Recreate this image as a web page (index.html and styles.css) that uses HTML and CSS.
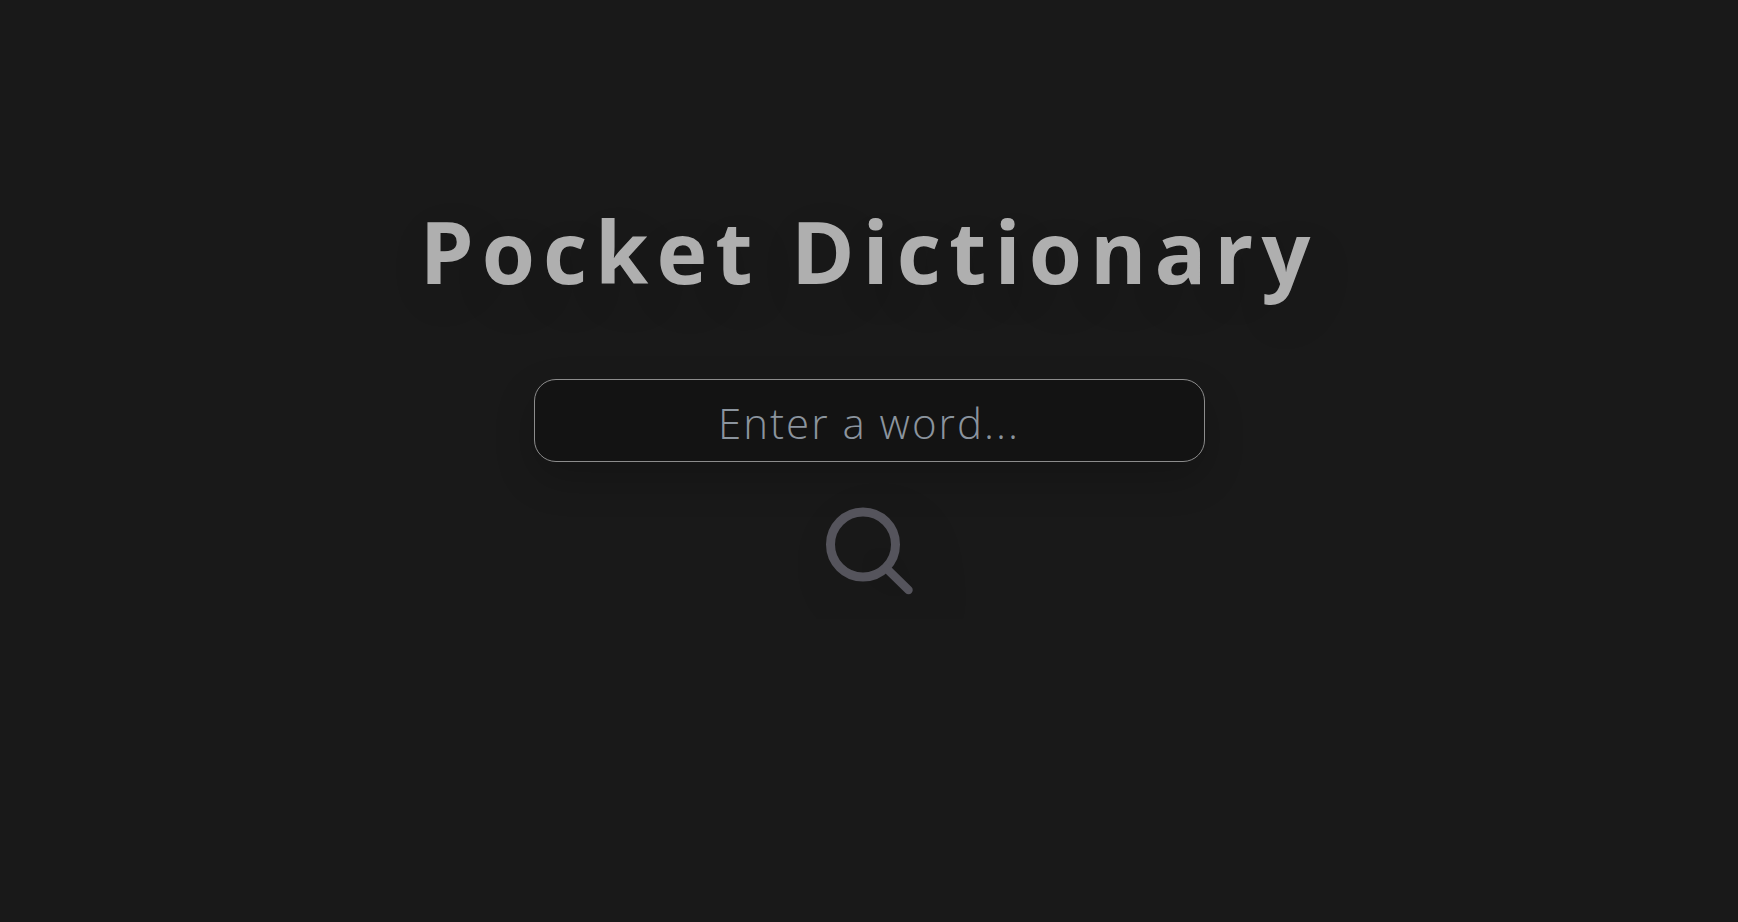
FILE: index.html
```html
<!DOCTYPE html>
<html lang="en">
<head>
<meta charset="utf-8">
<meta name="viewport" content="width=device-width, initial-scale=1">
<title>Pocket Dictionary</title>
<link rel="stylesheet" href="styles.css">
</head>
<body>
<main class="page">
  <h1 class="title">Pocket Dictionary</h1>
  <form class="search">
    <input class="search-input" type="text" placeholder="Enter a word..." aria-label="Word">
    <button class="search-button" type="submit" aria-label="Search">
      <svg class="search-icon" viewBox="0 0 88 88" fill="none" stroke="currentColor" stroke-width="9" stroke-linecap="round" aria-hidden="true">
        <circle cx="38" cy="37.5" r="32.5"/>
        <path d="M61 61 83.5 83" stroke-width="8.5"/>
      </svg>
    </button>
  </form>
</main>
</body>
</html>
```
FILE: styles.css
```css
* {
  box-sizing: border-box;
}

body {
  margin: 0;
  background: #191919;
  font-family: "Segoe UI", "Open Sans", sans-serif;
}

.page {
  display: flex;
  flex-direction: column;
  align-items: center;
  gap: 68px;
  padding: 191px 24px 24px;
}

.title {
  margin: 0;
  color: #afafaf;
  font-size: 86px;
  font-weight: 700;
  line-height: 120px;
  letter-spacing: 8px;
  text-align: center;
  text-shadow: 8px 16px 48px rgba(0, 0, 0, 0.12);
}

.search {
  display: flex;
  flex-direction: column;
  align-items: center;
  gap: 45px;
  width: 100%;
}

.search-input {
  width: 100%;
  max-width: 671px;
  height: 83px;
  padding: 4px 24px 0;
  border: 1px solid #8c8c8c;
  border-radius: 22px;
  background: #131313;
  box-shadow: 0 16px 40px rgba(0, 0, 0, 0.2);
  color: #afafaf;
  font-family: inherit;
  font-size: 42px;
  font-weight: 300;
  letter-spacing: 2px;
  text-align: center;
}

.search-input::placeholder {
  color: #8b949e;
  opacity: 1;
}

.search-button {
  padding: 0;
  border: 0;
  background: none;
  color: #55545c;
  cursor: pointer;
}

.search-icon {
  display: block;
  width: 88px;
  height: 88px;
  overflow: visible;
  filter: drop-shadow(16px 20px 24px rgba(0, 0, 0, 0.2));
}
```
